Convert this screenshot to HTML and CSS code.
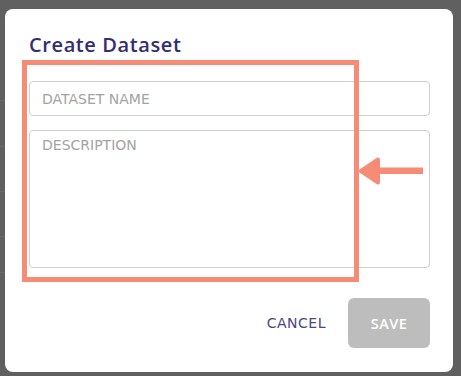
FILE: index.html
```html
<!DOCTYPE html>
<html>
<head>
<meta charset="utf-8">
<link rel="stylesheet" href="styles.css">
</head>
<body>
<div class="backdrop">
  <div class="page-lines">
    <div class="pl"></div><div class="pl"></div><div class="pl"></div><div class="pl"></div><div class="pl"></div>
  </div>
  <div class="dialog">
    <h2 class="title">Create Dataset</h2>
    <div class="fields">
      <input class="field" type="text" placeholder="DATASET NAME">
      <textarea class="field area" placeholder="DESCRIPTION"></textarea>
    </div>
    <div class="actions">
      <button class="btn cancel">CANCEL</button>
      <button class="btn save" disabled>SAVE</button>
    </div>
    <div class="highlight"></div>
    <svg class="arrow" width="70" height="34" viewBox="0 0 70 34">
      <rect x="18" y="10.5" width="47" height="6.5" fill="#f68c76"/>
      <polygon points="3,14 20,2.5 20,25.5" fill="#f68c76" stroke="#f68c76" stroke-width="4" stroke-linejoin="round"/>
    </svg>
  </div>
</div>
</body>
</html>
```

FILE: styles.css
```css
* { box-sizing: border-box; }
html, body { margin: 0; padding: 0; }
body {
  width: 461px;
  height: 376px;
  overflow: hidden;
  background: #606060;
  font-family: "DejaVu Sans", sans-serif;
}
.backdrop {
  position: relative;
  width: 461px;
  height: 376px;
  padding: 9px 8px 4px 5px;
}
.page-lines {
  position: absolute;
  left: 0; top: 0;
  width: 8px;
  height: 376px;
}
.pl { position: absolute; left: 0; width: 8px; height: 1px; background: #6b6b6b; }
.pl:nth-child(1) { top: 100px; }
.pl:nth-child(2) { top: 146px; }
.pl:nth-child(3) { top: 191px; }
.pl:nth-child(4) { top: 236px; }
.pl:nth-child(5) { top: 272px; }
.dialog {
  position: relative;
  width: 448px;
  height: 363px;
  background: #ffffff;
  border-radius: 8px;
  padding: 0 23px 24px 24px;
  display: flex;
  flex-direction: column;
}
.title {
  margin: 23px 0 0 0;
  font-family: "Open Sans", sans-serif;
  font-size: 20px;
  line-height: 26px;
  font-weight: 600;
  color: #322e75;
  letter-spacing: 0.6px;
}
.fields {
  margin-top: 23px;
  display: flex;
  flex-direction: column;
  gap: 14px;
}
.field {
  display: block;
  width: 401px;
  height: 35px;
  border: 1px solid #cfcfcf;
  border-radius: 4px;
  padding: 0 12px;
  font-family: "DejaVu Sans", sans-serif;
  font-size: 14px;
  color: #555;
  background: #fff;
  outline: none;
}
.field::placeholder { color: #a3a3a3; }
.area {
  height: 138px;
  padding: 6px 12px;
  resize: none;
}
.actions {
  margin-top: auto;
  display: flex;
  justify-content: flex-end;
  align-items: center;
  gap: 22px;
}
.btn {
  font-family: "DejaVu Sans", sans-serif;
  font-size: 14px;
  font-weight: 400;
  border: none;
  background: none;
  padding: 0;
  cursor: pointer;
}
.cancel { color: #4b4585; letter-spacing: 0.5px; }
.save {
  width: 82px;
  height: 50px;
  border-radius: 6px;
  background: #bdbdbd;
  color: #ffffff;
  font-family: "Open Sans", sans-serif;
  font-weight: 600;
  font-size: 14.5px;
  letter-spacing: 0.5px;
}
.highlight {
  position: absolute;
  left: 17px;
  top: 51px;
  width: 337px;
  height: 222px;
  border: 5px solid #f68c76;
  pointer-events: none;
}
.arrow {
  position: absolute;
  left: 353px;
  top: 148px;
}
```
